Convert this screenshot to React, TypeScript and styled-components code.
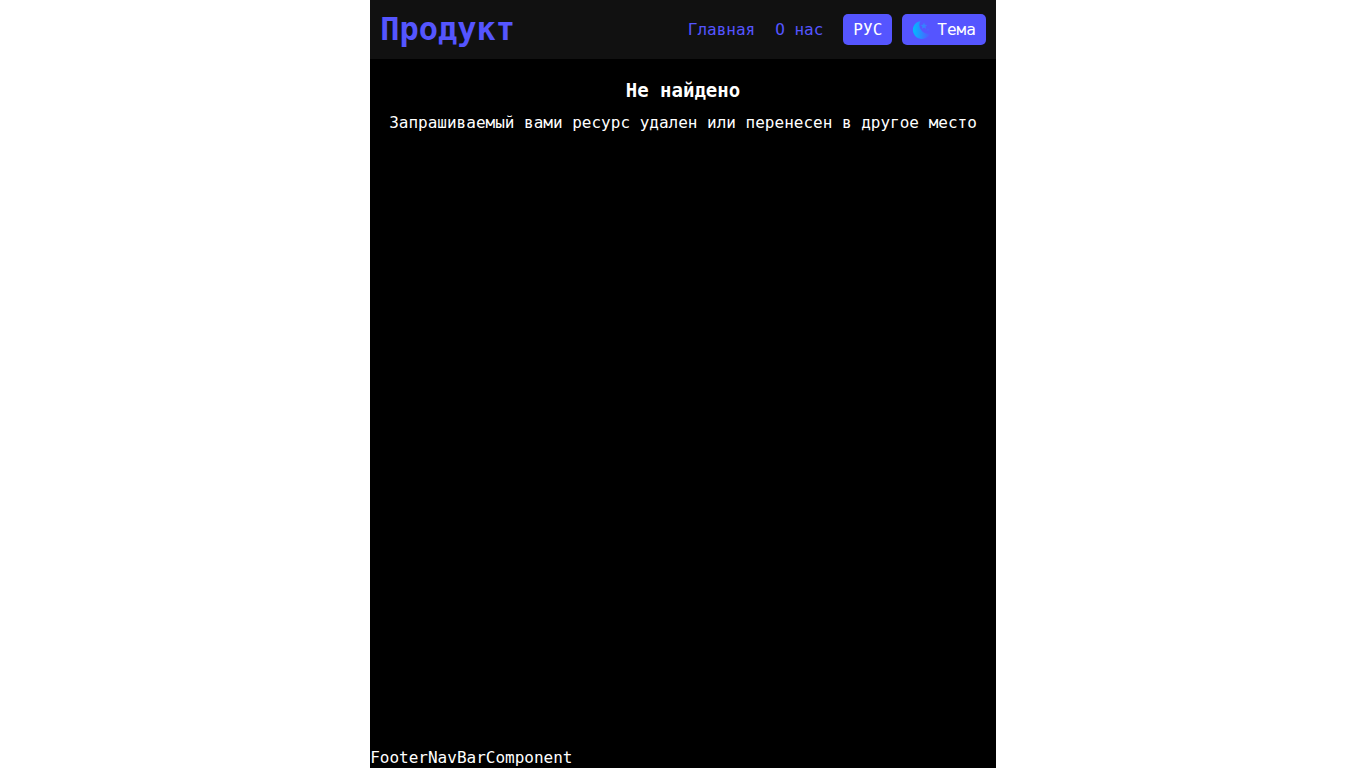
import React from "react";
import styled, { createGlobalStyle } from "styled-components";

const GlobalStyle = createGlobalStyle`
  *, *::before, *::after { box-sizing: border-box; }
  body {
    margin: 0;
    background: #fff;
    font: 16px/21px "DejaVu Sans Mono", "Liberation Mono", monospace;
  }
`;

const Page = styled.div`
  display: flex;
  flex-direction: column;
  width: fit-content;
  max-width: 100%;
  min-height: 100vh;
  margin: 0 auto;
  background: #000;
  color: #fff;
`;

const Header = styled.header`
  display: flex;
  flex-wrap: wrap;
  align-items: center;
  justify-content: space-between;
  gap: 10px;
  padding: 8px 10px;
  background: #111;
`;

const Logo = styled.a`
  color: #55f;
  font-size: 32px;
  font-weight: 700;
  line-height: 43px;
  text-decoration: none;
`;

const Controls = styled.div`
  display: flex;
  align-items: center;
  gap: 10px;
`;

const Nav = styled.nav`
  display: flex;
`;

const NavLink = styled.a`
  padding: 0 10px;
  color: #55f;
  text-decoration: none;
`;

const Button = styled.button`
  display: flex;
  align-items: center;
  gap: 5px;
  padding: 5px 10px;
  border: 0;
  border-radius: 5px;
  background: #55f;
  color: #fff;
  font: inherit;
  cursor: pointer;
`;

const Main = styled.main`
  flex: 1;
  display: flex;
  flex-direction: column;
  gap: 10px;
  padding: 19px;
  text-align: center;
`;

const Title = styled.h1`
  margin: 0;
  font-size: 19px;
  line-height: 24px;
`;

const Message = styled.p`
  margin: 0;
`;

const MoonIcon = () => (
  <svg width="20" height="20" viewBox="0 0 20 20" aria-hidden="true">
    <defs>
      <linearGradient id="moon" x1="0" y1="0" x2="1" y2="0">
        <stop offset="0" stopColor="#0bf" />
        <stop offset="1" stopColor="#55f" />
      </linearGradient>
      <linearGradient id="star" x1="0" y1="0" x2="1" y2="0">
        <stop offset="0" stopColor="#2d8cff" />
        <stop offset="1" stopColor="#3f78ff" />
      </linearGradient>
    </defs>
    <path
      d="M8.5 1A9 9 0 1 0 18.2 13.4A8.6 8.6 0 0 1 8.5 1Z"
      fill="url(#moon)"
    />
    <path
      d="M12 2.6L12.9 4.7L15.2 4.9L13.5 6.4L14 8.7L12 7.5L10 8.7L10.5 6.4L8.8 4.9L11.1 4.7Z"
      fill="url(#star)"
    />
    <path
      d="M16 8L16.5 9.3L17.8 9.8L16.5 10.3L16 11.6L15.5 10.3L14.2 9.8L15.5 9.3Z"
      fill="#4866ff"
    />
  </svg>
);

export default function App() {
  return (
    <>
      <GlobalStyle />
      <Page>
        <Header>
          <Logo href="#">Продукт</Logo>
          <Controls>
            <Nav>
              <NavLink href="#">Главная</NavLink>
              <NavLink href="#about">О нас</NavLink>
            </Nav>
            <Button type="button">РУС</Button>
            <Button type="button">
              <MoonIcon />
              Тема
            </Button>
          </Controls>
        </Header>
        <Main>
          <Title>Не найдено</Title>
          <Message>Запрашиваемый вами ресурс удален или перенесен в другое место</Message>
        </Main>
        <footer>FooterNavBarComponent</footer>
      </Page>
    </>
  );
}
